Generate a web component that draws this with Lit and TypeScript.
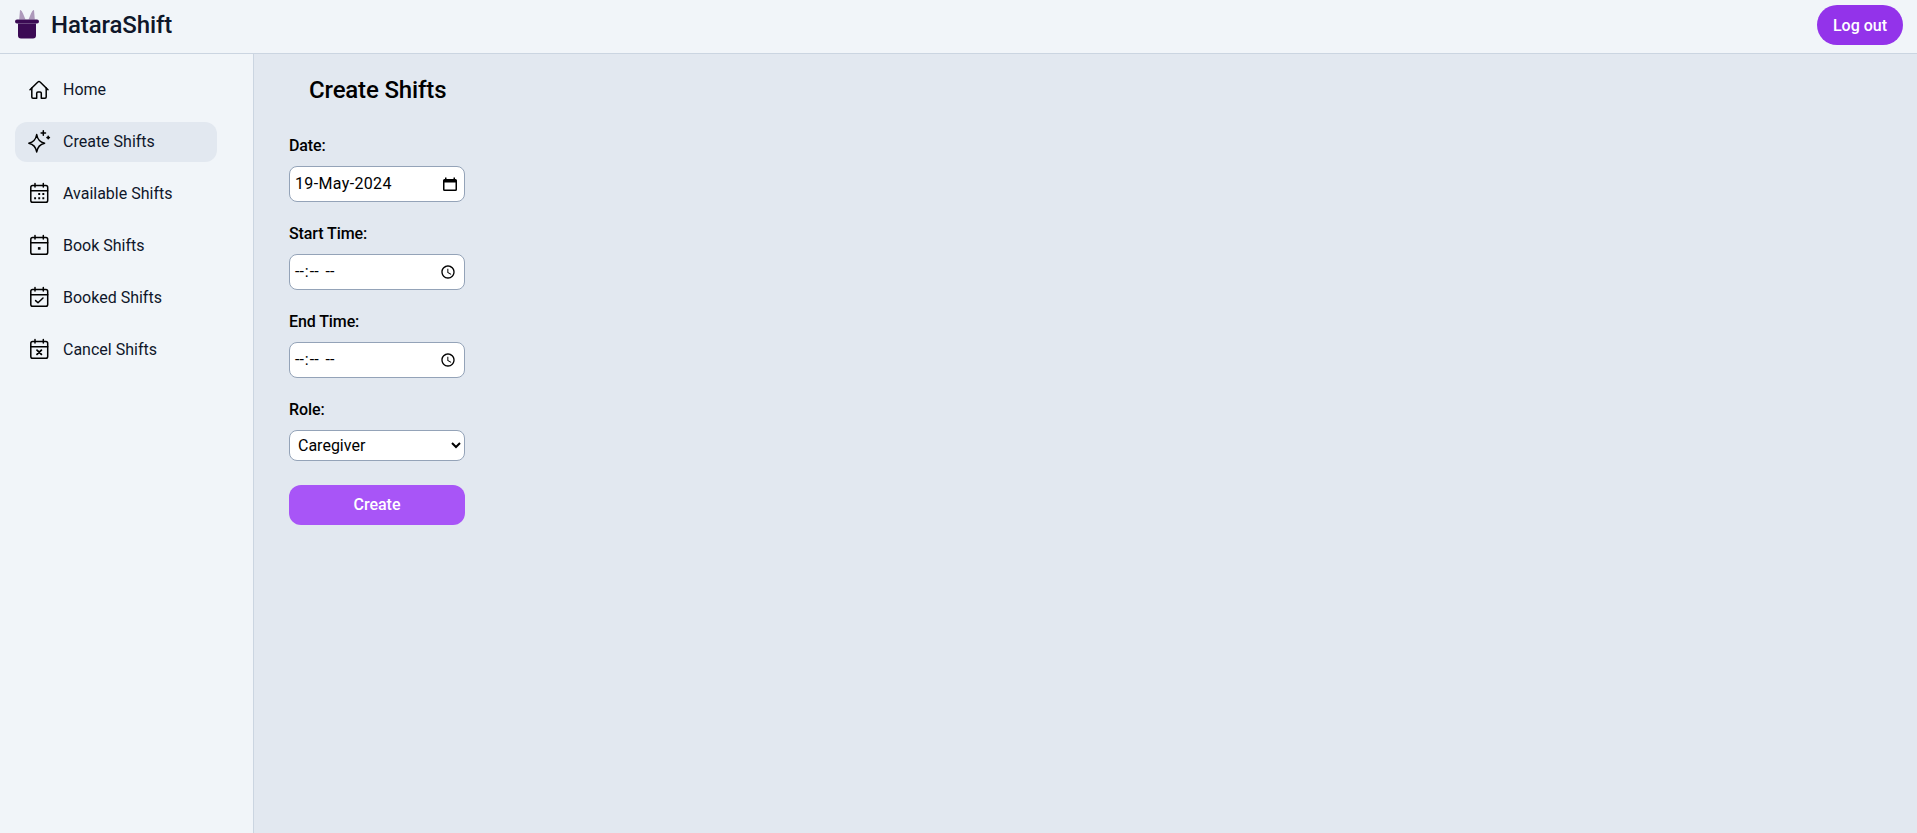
import { LitElement, html, css, svg } from "lit";
import { customElement } from "lit/decorators.js";

const base = (body: unknown) => svg`<svg viewBox="0 0 24 24" class="ic" fill="none" stroke="currentColor" stroke-width="1.5" stroke-linecap="round" stroke-linejoin="round">${body}</svg>`;

const cal = (extra: unknown) => base(svg`<path d="M8 2.6v3.4M16.3 2.6v3.4"/><rect x="3.8" y="4.6" width="16.9" height="16.6" rx="1.8"/><path d="M3.8 9.8h16.9"/>${extra}`);

const NAV = [
  { label: "Home", icon: base(svg`<path d="M3 12.8 10.9 5a1.5 1.5 0 0 1 2.2 0L21 12.8"/><path d="M4.8 11V20a1.2 1.2 0 0 0 1.2 1.2H9.7v-5a1.2 1.2 0 0 1 1.2-1.2h2.2a1.2 1.2 0 0 1 1.2 1.2v5H18a1.2 1.2 0 0 0 1.2-1.2V11"/>`) },
  { label: "Create Shifts", active: true, icon: base(svg`<path d="M9.7 5.5Q10.9 12.8 17.6 14.2 10.9 15.6 9.7 23 8.5 15.6 1.8 14.2 8.5 12.8 9.7 5.5Z"/><path d="M16.3 1.8v4.4M14.1 4h4.4"/><path stroke-width="1.6" d="M21.2 7.4v2.4M20 8.6h2.4"/>`) },
  { label: "Available Shifts", icon: cal(svg`<path stroke-width="1.9" stroke-linecap="square" d="M12.2 13h.01M16.3 13h.01M8.1 17.2h.01M12.2 17.2h.01M16.3 17.2h.01"/>`) },
  { label: "Book Shifts", icon: cal(svg`<path stroke-width="2.6" stroke-linecap="square" d="M12.2 15.4h.01"/>`) },
  { label: "Booked Shifts", icon: cal(svg`<path d="m8.6 15.6 2.4 2.2 5-4.8"/>`) },
  { label: "Cancel Shifts", icon: cal(svg`<path stroke-width="1.8" d="m10 13.2 4.4 4.2M14.4 13.2 10 17.4"/>`) },
];

@customElement("app-root")
export class AppRoot extends LitElement {
  static styles = css`
    :host {
      display: flex;
      flex-direction: column;
      height: 833px;
      overflow: hidden;
      font-family: Roboto, "Liberation Sans", sans-serif;
      font-size: 16px;
      color: #000;
      background: #e2e8f0;
    }
    * { box-sizing: border-box; }
    .top {
      height: 54px;
      flex: none;
      display: flex;
      align-items: center;
      justify-content: space-between;
      padding: 0 14px 3px 15px;
      background: #f1f5f9;
      border-bottom: 1px solid #cbd5e1;
    }
    .brand { display: flex; align-items: center; gap: 12px; }
    .logo { width: 24px; height: 30px; display: block; margin-bottom: 3px; }
    .name { font-size: 24px; font-weight: 500; color: #0f172a; line-height: 32px; letter-spacing: -0.1px; }
    .logout {
      width: 86px;
      height: 40px;
      border: 0;
      border-radius: 20px;
      background: #9333ea;
      color: #fff;
      font: 500 16px Roboto, sans-serif;
    }
    .body { flex: 1; display: flex; min-height: 0; }
    .side {
      width: 254px;
      flex: none;
      background: #f1f5f9;
      border-right: 1px solid #cbd5e1;
      padding: 16px 15px;
      display: flex;
      flex-direction: column;
      gap: 12px;
    }
    .item {
      width: 202px;
      height: 40px;
      display: flex;
      align-items: center;
      gap: 12px;
      padding: 0 12px 2px;
      border-radius: 12px;
      color: #0f172a;
    }
    .item.on { background: #e2e8f0; }
    .ic { width: 24px; height: 24px; flex: none; display: block; color: #000; overflow: visible; }
    .main { flex: 1; padding: 20px 35px; }
    h1 {
      margin: 0 0 28px;
      padding-left: 20px;
      font-size: 24px;
      line-height: 32px;
      font-weight: 500;
      letter-spacing: -0.15px;
    }
    .form { width: 176px; display: flex; flex-direction: column; }
    label { font-weight: 500; line-height: 24px; margin-bottom: 8px; display: block; letter-spacing: -0.1px; }
    .group { margin-bottom: 20px; }
    .field {
      width: 176px;
      height: 36px;
      border: 1px solid #94a3b8;
      border-radius: 8px;
      background: #fff;
      display: flex;
      align-items: center;
      font: 16px Roboto, sans-serif;
      color: #000;
      padding: 0 4px;
    }
    input.field { display: block; outline: none; }
    input.field::-webkit-datetime-edit-ampm-field { margin-left: 3px; }
    .date { padding: 0 6px 0 5px; justify-content: space-between; letter-spacing: 0.35px; }
    .date span { margin-bottom: 2px; }
    .date svg { width: 16px; height: 16px; display: block; }
    select.field { height: 31px; padding: 0 0 0 4px; }
    .create {
      margin-top: 4px;
      width: 176px;
      height: 40px;
      border: 0;
      border-radius: 12px;
      background: #a855f7;
      color: #fff;
      font: 500 16px Roboto, sans-serif;
      padding: 0 0 2px;
    }
  `;

  render() {
    return html`
      <header class="top">
        <div class="brand">
          <svg class="logo" viewBox="0 0 24 30">
            <path d="M5 1Q6.5 .5 8 4.5L10.5 10.5H4.2ZM19 1Q17.5 .5 16 4.5L13.5 10.5H19.8Z" fill="#ad99bb"/>
            <rect x="0" y="10.5" width="24" height="4" rx="2" fill="#3b0a54"/>
            <path d="M3 14.5h18v12a3 3 0 0 1-3 3H6a3 3 0 0 1-3-3z" fill="#3b0a54"/>
          </svg>
          <span class="name">HataraShift</span>
        </div>
        <button class="logout">Log out</button>
      </header>
      <div class="body">
        <nav class="side">
          ${NAV.map(n => html`<div class="item ${n.active ? "on" : ""}">${n.icon}<span>${n.label}</span></div>`)}
        </nav>
        <main class="main">
          <h1>Create Shifts</h1>
          <div class="form">
            <div class="group">
              <label>Date:</label>
              <div class="field date"><span>19-May-2024</span>
                <svg viewBox="0 0 16 16"><path fill="#000" d="M3 1.5h1.5V3h7V1.5H13V3h.5A1.5 1.5 0 0 1 15 4.5v9a1.5 1.5 0 0 1-1.5 1.5h-11A1.5 1.5 0 0 1 1 13.5v-9A1.5 1.5 0 0 1 2.5 3H3zM2.5 6.5v7h11v-7z"/></svg>
              </div>
            </div>
            <div class="group"><label>Start Time:</label><input class="field" type="time" /></div>
            <div class="group"><label>End Time:</label><input class="field" type="time" /></div>
            <div class="group"><label>Role:</label>
              <select class="field"><option>Caregiver</option><option>Nurse</option></select>
            </div>
            <button class="create">Create</button>
          </div>
        </main>
      </div>
    `;
  }
}
